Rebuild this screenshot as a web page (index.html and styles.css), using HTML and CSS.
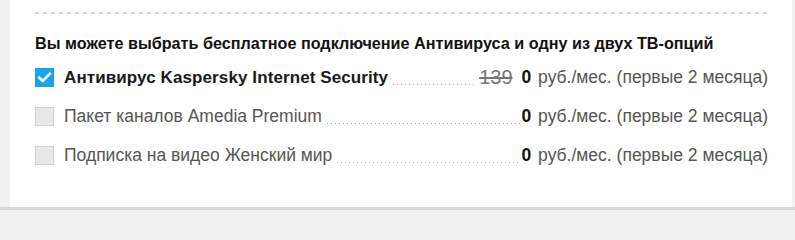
FILE: index.html
```html
<!DOCTYPE html>
<html lang="ru">
<head>
<meta charset="utf-8">
<link rel="stylesheet" href="styles.css">
</head>
<body>
<div class="page">
  <div class="card">
    <div class="divider"></div>
    <h3 class="title">Вы можете выбрать бесплатное подключение Антивируса и одну из двух ТВ-опций</h3>
    <ul class="options">
      <li class="option checked">
        <span class="box"><svg viewBox="0 0 19 19" width="19" height="19"><path d="M4.2 9.6 L7.8 13 L14.8 5.8" fill="none" stroke="#fff" stroke-width="2.6" stroke-linecap="square"/></svg></span>
        <span class="name">Антивирус Kaspersky Internet Security</span>
        <span class="leader"></span>
        <span class="old">139</span>
        <span class="price"><b>0</b> руб./мес. (первые 2 месяца)</span>
      </li>
      <li class="option">
        <span class="box"></span>
        <span class="name">Пакет каналов Amedia Premium</span>
        <span class="leader"></span>
        <span class="price"><b>0</b> руб./мес. (первые 2 месяца)</span>
      </li>
      <li class="option">
        <span class="box"></span>
        <span class="name">Подписка на видео Женский мир</span>
        <span class="leader"></span>
        <span class="price"><b>0</b> руб./мес. (первые 2 месяца)</span>
      </li>
    </ul>
  </div>
</div>
</body>
</html>
```
FILE: styles.css
```css
html, body {
  margin: 0;
  padding: 0;
}
html {
  height: 210px;
  overflow: hidden;
  background: #f1f1f1;
}
body {
  font-family: "Liberation Sans", Arial, sans-serif;
  width: 795px;
  height: 210px;
  overflow: hidden;
}
.page {
  padding: 0 3px 0 10px;
  height: 207px;
  border-bottom: 3px solid #d6d6d6;
}
.card {
  background: #fff;
  height: 207px;
  padding: 12px 24px 0 25px;
  box-sizing: border-box;
}
.divider {
  height: 2px;
  background: repeating-linear-gradient(to right, #d0d0d0 0 4px, transparent 4px 8px);
}
.title {
  margin: 19px 0 0 0;
  font-size: 16.2px;
  font-weight: bold;
  color: #111;
  line-height: 20px;
}
.options {
  list-style: none;
  margin: 15px 0 0 0;
  padding: 0;
  display: flex;
  flex-direction: column;
  gap: 20px;
}
.option {
  display: flex;
  align-items: center;
  height: 19px;
  font-size: 17.5px;
  color: #555;
}
.box {
  width: 19px;
  height: 19px;
  box-sizing: border-box;
  border: 1px solid #d2d2d2;
  background: #e8e8e8;
  flex: none;
  margin-right: 10px;
}
.box svg {
  display: block;
}
.checked .box {
  background: #1ba3e8;
  border: none;
}
.name {
  white-space: nowrap;
}
.checked .name {
  font-weight: bold;
  color: #1a1a1a;
  letter-spacing: 0.1px;
  font-size: 17px;
}
.leader {
  flex: 1;
  height: 1px;
  align-self: flex-end;
  margin: 0 2px 2px 5px;
  background: repeating-linear-gradient(to right, #aaa 0 1px, transparent 1px 4px);
}
.old {
  font-size: 20px;
  color: #777;
  text-decoration: line-through;
  margin-right: 9px;
}
.price {
  white-space: nowrap;
}
.price b {
  color: #111;
  margin-right: 2px;
}
```
